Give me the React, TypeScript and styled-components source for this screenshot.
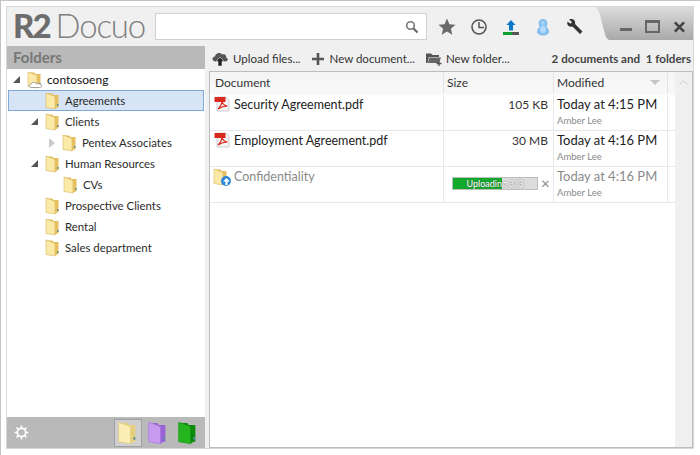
import React from 'react';
import styled, { createGlobalStyle } from 'styled-components';

const folders = [
  { name: 'contosoeng', depth: 0, arrow: 'open', root: true },
  { name: 'Agreements', depth: 1, selected: true },
  { name: 'Clients', depth: 1, arrow: 'open' },
  { name: 'Pentex Associates', depth: 2, arrow: 'closed' },
  { name: 'Human Resources', depth: 1, arrow: 'open' },
  { name: 'CVs', depth: 2 },
  { name: 'Prospective Clients', depth: 1 },
  { name: 'Rental', depth: 1 },
  { name: 'Sales department', depth: 1 },
];

const documents = [
  { name: 'Security Agreement.pdf', size: '105 KB', modified: 'Today at 4:15 PM' },
  { name: 'Employment Agreement.pdf', size: '30 MB', modified: 'Today at 4:16 PM' },
];

function FolderIcon({
  size = 18,
  light = '#fbe9a8',
  dark = '#e6c05f',
  edge = '#cda84f',
  cloud = false,
}: {
  size?: number;
  light?: string;
  dark?: string;
  edge?: string;
  cloud?: boolean;
}) {
  return (
    <svg width={size} height={size} viewBox="0 0 18 18">
      <path d="M2 1.5 H8.5 L9.5 3 H14.5 V15.5 H8 Z" fill={dark} />
      <path d="M2 1 L9 3.5 L11 4.5 V17 L2 15.5 Z" fill={light} stroke={edge} strokeWidth="0.5" />
      <path d="M11 4.5 L13 5 V15.5 L11 17 Z" fill={dark} />
      <rect x="13" y="12" width="1.5" height="2" fill="#5f8f9f" />
      {cloud && (
        <path
          d="M5 16.5 C2.5 16.5 2.5 13.5 5 13.3 C5.5 10.8 9.5 10.5 10.5 13 C13 12.3 15.5 12.8 15.5 14.8 C15.5 16 14.5 16.5 13.5 16.5 Z"
          fill="#fff"
          stroke="#8a8a8a"
          strokeWidth="0.8"
        />
      )}
    </svg>
  );
}

function PdfIcon() {
  return (
    <svg width="16" height="16" viewBox="0 0 16 16">
      <path d="M3 1 H12 L15 4 V15 H3 Z" fill="#f4f4f4" stroke="#c4c4c4" strokeWidth="0.8" />
      <rect x="0.5" y="1" width="11" height="5" fill="#d9281c" />
      <path d="M4 13 C7 10 8 7 7.6 5 C9 8.5 11 10 13.5 10 C10 10 7 11 4 13 Z" fill="none" stroke="#d9281c" strokeWidth="1.1" />
    </svg>
  );
}

export default function App() {
  return (
    <Page>
      <GlobalStyle />
      <Window>
        <Header>
          <Logo>
            <LogoMark>R2</LogoMark>
            <LogoName>Docuo</LogoName>
          </Logo>
          <SearchBox>
            <svg width="14" height="14" viewBox="0 0 14 14">
              <circle cx="5.5" cy="5.5" r="3.8" fill="none" stroke="#777" strokeWidth="1.6" />
              <path d="M8.5 8.5 L12.5 12.5" stroke="#666" strokeWidth="2.2" />
            </svg>
          </SearchBox>
          <HeaderIcons>
            <HeaderIcon>
              <svg width="18" height="18" viewBox="0 0 18 18">
                <path d="M9 0.5 L11.4 6.2 L17.5 6.7 L12.9 10.7 L14.3 16.8 L9 13.6 L3.7 16.8 L5.1 10.7 L0.5 6.7 L6.6 6.2 Z" fill="#6a6a6a" />
              </svg>
            </HeaderIcon>
            <HeaderIcon>
              <svg width="18" height="18" viewBox="0 0 18 18">
                <circle cx="9" cy="9" r="7" fill="none" stroke="#555" strokeWidth="1.6" />
                <path d="M9 4 V9.5 H14" fill="none" stroke="#555" strokeWidth="1.5" />
              </svg>
            </HeaderIcon>
            <HeaderIcon>
              <svg width="18" height="18" viewBox="0 0 18 18">
                <path d="M9 2 L13.5 7 H11 V12.5 H7 V7 H4.5 Z" fill="#0a77c9" />
                <rect x="1" y="14" width="9" height="3" fill="#12a02c" />
                <rect x="10" y="14" width="7" height="3" fill="#555" />
              </svg>
            </HeaderIcon>
            <HeaderIcon>
              <svg width="18" height="18" viewBox="0 0 18 18">
                <path
                  d="M9 1.5 C12 1.5 12.8 3.2 12.8 5 C12.8 6.8 12.3 8 12 9 C13.6 10 14.5 12 14.5 14 C14.5 16 12 17 9 17 C6 17 3.5 16 3.5 14 C3.5 12 4.4 10 6 9 C5.7 8 5.2 6.8 5.2 5 C5.2 3.2 6 1.5 9 1.5 Z"
                  fill="#86c0f2"
                  stroke="#6aaee6"
                  strokeWidth="0.7"
                />
                <ellipse cx="9" cy="11.5" rx="3" ry="3.5" fill="#b4dafa" />
                <ellipse cx="9" cy="5" rx="1.8" ry="2.2" fill="#a8d4f8" />
              </svg>
            </HeaderIcon>
            <HeaderIcon>
              <svg width="18" height="18" viewBox="0 0 18 18">
                <path d="M3 1.5 L6 4 L4.5 5.8 L1.5 3.5 C0.5 7 3 9.5 6.5 8.5 L14 16 L16.5 13.5 L9 6 C10 2.5 7 0 3 1.5 Z" fill="#333" />
              </svg>
            </HeaderIcon>
          </HeaderIcons>
          <WindowControls>
            <ControlMin />
            <ControlMax />
            <svg width="14" height="14" viewBox="0 0 14 14">
              <path d="M2 2 L12 12 M12 2 L2 12" stroke="#444" strokeWidth="2.8" />
            </svg>
          </WindowControls>
        </Header>
        <Body>
          <Sidebar>
            <SidebarTitle>Folders</SidebarTitle>
            <Tree>
              {folders.map((f) => (
                <TreeRow key={f.name} $depth={f.depth} $selected={!!f.selected}>
                  <Arrow $kind={f.arrow} />
                  <FolderIcon cloud={!!f.root} />
                  <TreeLabel $root={!!f.root}>{f.name}</TreeLabel>
                </TreeRow>
              ))}
            </Tree>
            <SidebarFooter>
              <svg width="15" height="15" viewBox="0 0 15 15">
                <circle cx="7.5" cy="7.5" r="4.2" fill="none" stroke="#fff" strokeWidth="1.8" />
                <path d="M7.5 0.5 V3 M7.5 12 V14.5 M0.5 7.5 H3 M12 7.5 H14.5 M2.5 2.5 L4.2 4.2 M10.8 10.8 L12.5 12.5 M12.5 2.5 L10.8 4.2 M4.2 10.8 L2.5 12.5" stroke="#fff" strokeWidth="1.6" />
              </svg>
              <FooterFolders>
                <FooterButton $active><FolderIcon size={24} light="#fbeeb4" dark="#e6cf7e" edge="#e0c878" /></FooterButton>
                <FooterButton><FolderIcon size={24} light="#c79cf0" dark="#9a62d8" edge="#a878e0" /></FooterButton>
                <FooterButton><FolderIcon size={24} light="#25b51f" dark="#0a8a0c" edge="#109a10" /></FooterButton>
              </FooterFolders>
            </SidebarFooter>
          </Sidebar>
          <Main>
            <Toolbar>
              <ToolButton $gap={4}>
                <svg width="18" height="16" viewBox="0 0 18 16">
                  <path d="M4.5 10.5 C1 10.5 0.5 6 4 5.5 C4.5 2 9 1 11 3.5 C14 2.5 16 5 15 6.5 C18 7.5 17 10.5 14 10.5 Z" fill="#555" />
                  <path d="M9 6 L13 10.5 H11 V15 H7 V10.5 H5 Z" fill="#222" stroke="#eee" strokeWidth="0.6" />
                </svg>
                Upload files...
              </ToolButton>
              <ToolButton $gap={5}>
                <svg width="14" height="14" viewBox="0 0 14 14">
                  <path d="M7 1 V13 M1 7 H13" stroke="#555" strokeWidth="2.6" />
                </svg>
                New document...
              </ToolButton>
              <ToolButton $gap={3}>
                <svg width="18" height="14" viewBox="0 0 18 14">
                  <path d="M1 1.5 H6 L7.5 3 H14 V5 H4 L2.5 11 H1 Z" fill="#555" />
                  <path d="M4.5 5.5 H16 L14 11 H2.8 Z" fill="#666" />
                  <path d="M14 9 V14 M11.5 11.5 H16.5" stroke="#555" strokeWidth="1.3" />
                </svg>
                New folder...
              </ToolButton>
              <Summary>2 documents and&nbsp; 1 folders</Summary>
            </Toolbar>
            <ListPanel>
              <ListColumn>
                <ColumnHeads>
                  <NameHead>Document</NameHead>
                  <SizeHead>Size</SizeHead>
                  <ModifiedHead>
                    Modified
                    <SortArrow />
                  </ModifiedHead>
                  <HeadGap />
                </ColumnHeads>
                {documents.map((d) => (
                  <DocRow key={d.name}>
                    <NameCell>
                      <PdfIcon />
                      <DocName>{d.name}</DocName>
                    </NameCell>
                    <SizeCell>{d.size}</SizeCell>
                    <ModifiedCell>
                      <ModifiedTime>{d.modified}</ModifiedTime>
                      <Author>Amber Lee</Author>
                    </ModifiedCell>
                    <GapCell />
                  </DocRow>
                ))}
                <DocRow>
                  <UploadNameCell>
                    <UploadFolder>
                      <FolderIcon />
                      <UploadBadge>
                        <svg width="9" height="9" viewBox="0 0 9 9">
                          <path d="M4.5 1 L8 4.5 H5.6 V8 H3.4 V4.5 H1 Z" fill="#fff" />
                        </svg>
                      </UploadBadge>
                    </UploadFolder>
                    <DocName $faded>Confidentiality</DocName>
                  </UploadNameCell>
                  <ProgressCell>
                    <ProgressTrack>
                      <ProgressFill style={{ width: `${(50 / 86) * 100}%` }} />
                      <ProgressText>Uploading 3/3</ProgressText>
                    </ProgressTrack>
                    <CancelMark>×</CancelMark>
                  </ProgressCell>
                  <ModifiedCell>
                    <ModifiedTime $faded>Today at 4:16 PM</ModifiedTime>
                    <Author>Amber Lee</Author>
                  </ModifiedCell>
                  <GapCell />
                </DocRow>
              </ListColumn>
              <ScrollTrack>
                <svg width="9" height="5" viewBox="0 0 9 5">
                  <path d="M0.5 4.5 L4.5 0.8 L8.5 4.5" fill="none" stroke="#ccc" strokeWidth="1" />
                </svg>
              </ScrollTrack>
            </ListPanel>
          </Main>
        </Body>
      </Window>
    </Page>
  );
}

const GlobalStyle = createGlobalStyle`
  html, body {
    margin: 0;
    padding: 0;
    background: #fff;
  }
  body {
    font-family: "Lato", "Open Sans", sans-serif;
    color: #222;
  }
`;

const Page = styled.div`
  box-sizing: border-box;
  width: 700px;
  height: 455px;
  padding: 5px 6px 6px 5px;
  border-top: 1px solid #c4c4c4;
  border-left: 1px solid #c4c4c4;
`;

const Window = styled.div`
  box-sizing: border-box;
  height: 100%;
  display: flex;
  flex-direction: column;
  background: #f0f0f0;
  border: 1px solid #d8d8d8;
`;

const Header = styled.div`
  flex: none;
  height: 39px;
  display: flex;
  align-items: flex-start;
`;

const Logo = styled.div`
  width: 148px;
  height: 37px;
  padding-left: 6px;
  box-sizing: border-box;
  display: flex;
  align-items: center;
  gap: 6px;
  color: #777;
  white-space: nowrap;
`;

const LogoMark = styled.span`
  font-family: "Lato", sans-serif;
  font-weight: 900;
  font-size: 33px;
  letter-spacing: -2px;
  line-height: 1;
  color: #6d6d6d;
`;

const LogoName = styled.span`
  font-family: "Lato", sans-serif;
  font-weight: 300;
  font-size: 33px;
  letter-spacing: -1.2px;
  line-height: 1;
  color: #808080;
`;

const SearchBox = styled.div`
  box-sizing: border-box;
  width: 272px;
  height: 27px;
  margin-top: 6px;
  background: #fff;
  border: 1px solid #d0d0d0;
  display: flex;
  align-items: center;
  justify-content: flex-end;
  padding-right: 7px;
`;

const HeaderIcons = styled.div`
  display: flex;
  margin-left: 4px;
  margin-top: 10px;
`;

const HeaderIcon = styled.div`
  width: 32px;
  height: 20px;
  display: flex;
  align-items: center;
  justify-content: center;
`;

const WindowControls = styled.div`
  box-sizing: border-box;
  width: 97px;
  height: 33px;
  margin-left: auto;
  padding: 6px 7px 0 24px;
  display: flex;
  align-items: center;
  gap: 13px;
  background: linear-gradient(#dcdcdc, #a9a9a9);
  clip-path: path('M0 0 H97 V33 H14 C10 33 9 27 7 20 C5 12 4 5 0 0 Z');
`;

const ControlMin = styled.div`
  width: 13px;
  height: 3px;
  margin-top: 6px;
  background: #666;
`;

const ControlMax = styled.div`
  box-sizing: border-box;
  width: 16px;
  height: 13px;
  border: 2px solid #666;
  border-top-width: 3px;
`;

const Body = styled.div`
  flex: 1;
  min-height: 0;
  display: flex;
`;

const Sidebar = styled.div`
  flex: none;
  width: 198px;
  display: flex;
  flex-direction: column;
`;

const SidebarTitle = styled.div`
  height: 23px;
  padding-left: 6px;
  background: #b9b9b9;
  color: #777;
  font-size: 15px;
  font-weight: 700;
  line-height: 23px;
`;

const Tree = styled.div`
  flex: 1;
  background: #fff;
`;

const TreeRow = styled.div<{ $depth: number; $selected: boolean }>`
  box-sizing: border-box;
  height: 21px;
  margin: 0 1px;
  padding-left: ${(p) => 4 + p.$depth * 18}px;
  display: flex;
  align-items: center;
  background: ${(p) => (p.$selected ? '#d6e4f5' : 'transparent')};
  border: 1px solid ${(p) => (p.$selected ? '#7fa9d8' : 'transparent')};
`;

const Arrow = styled.span<{ $kind?: string }>`
  flex: none;
  width: 0;
  height: 0;
  margin-right: 6px;
  border-style: solid;
  ${(p) =>
    p.$kind === 'open'
      ? 'border-width: 0 0 7px 7px; border-color: transparent transparent #555 transparent;'
      : p.$kind === 'closed'
        ? 'border-width: 5px 0 5px 6px; border-color: transparent transparent transparent #ccc;'
        : 'border-width: 0 0 0 7px; border-color: transparent;'}
`;

const TreeLabel = styled.span<{ $root: boolean }>`
  margin-left: 3px;
  font-size: ${(p) => (p.$root ? 12 : 11.4)}px;
  color: ${(p) => (p.$root ? '#111' : '#2b2b2b')};
  white-space: nowrap;
`;

const SidebarFooter = styled.div`
  flex: none;
  height: 31px;
  background: #b9b9b9;
  display: flex;
  align-items: center;
  padding-left: 7px;
`;

const FooterFolders = styled.div`
  margin-left: auto;
  margin-right: 3px;
  display: flex;
  gap: 2px;
`;

const FooterButton = styled.div<{ $active?: boolean }>`
  box-sizing: border-box;
  width: 28px;
  height: 28px;
  display: flex;
  align-items: center;
  justify-content: center;
  background: ${(p) => (p.$active ? '#cfcfcf' : 'transparent')};
  border: 1px solid ${(p) => (p.$active ? '#a0a0a0' : 'transparent')};
`;

const Main = styled.div`
  flex: 1;
  min-width: 0;
  display: flex;
  flex-direction: column;
  padding-left: 4px;
`;

const Toolbar = styled.div`
  flex: none;
  height: 25px;
  display: flex;
  align-items: center;
  padding-left: 2px;
  gap: 10px;
`;

const ToolButton = styled.div<{ $gap: number }>`
  display: flex;
  align-items: center;
  gap: ${(p) => p.$gap}px;
  font-size: 11.5px;
  color: #333;
  white-space: nowrap;
`;

const Summary = styled.div`
  margin-left: auto;
  padding-right: 2px;
  font-size: 11.6px;
  font-weight: 700;
  color: #444;
  white-space: nowrap;
`;

const ListPanel = styled.div`
  flex: 1;
  min-height: 0;
  display: flex;
  background: #fff;
  border: 1px solid #bdbdbd;
`;

const ListColumn = styled.div`
  flex: 1;
  min-width: 0;
`;

const ColumnHeads = styled.div`
  height: 23px;
  padding-bottom: 2px;
  box-sizing: border-box;
  display: grid;
  grid-template-columns: 234px 110px 114px 1fr;
  background: linear-gradient(#f4f4f4, #f9f9f9);
  font-size: 12px;
  color: #333;
`;

const HeadCell = styled.div`
  box-sizing: border-box;
  display: flex;
  align-items: center;
  padding-left: 5px;
  border-right: 1px solid #e4e4e4;
`;

const NameHead = styled(HeadCell)``;
const SizeHead = styled(HeadCell)`
  padding-left: 3px;
`;
const ModifiedHead = styled(HeadCell)`
  padding-left: 3px;
  justify-content: space-between;
  padding-right: 7px;
`;
const HeadGap = styled.div``;

const SortArrow = styled.span`
  width: 0;
  height: 0;
  border-style: solid;
  border-width: 5px 5px 0 5px;
  border-color: #c4c4c4 transparent transparent transparent;
`;

const DocRow = styled.div`
  box-sizing: border-box;
  height: 36px;
  display: grid;
  grid-template-columns: 234px 110px 114px 1fr;
  border-bottom: 1px solid #e8e8e8;
`;

const CellBase = styled.div`
  box-sizing: border-box;
  border-right: 1px solid #e8e8e8;
`;

const NameCell = styled(CellBase)`
  display: flex;
  align-items: flex-start;
  padding: 1px 0 0 4px;
  gap: 4px;
`;

const UploadNameCell = styled(NameCell)`
  padding-left: 2px;
  gap: 4px;
`;

const DocName = styled.span<{ $faded?: boolean }>`
  font-size: 12.5px;
  line-height: 17px;
  color: ${(p) => (p.$faded ? '#8a8a8a' : '#222')};
  white-space: nowrap;
`;

const SizeCell = styled(CellBase)`
  padding: 3px 5px 0 0;
  text-align: right;
  font-size: 12px;
  line-height: 14px;
  color: #333;
`;

const ProgressCell = styled(CellBase)`
  display: flex;
  align-items: flex-start;
  padding: 10px 0 0 8px;
`;

const ProgressTrack = styled.div`
  position: relative;
  box-sizing: border-box;
  width: 86px;
  height: 13px;
  background: #dcdcdc;
  border: 1px solid #bdbdbd;
  overflow: hidden;
`;

const ProgressFill = styled.div`
  height: 100%;
  background: #12a92c;
`;

const ProgressText = styled.span`
  position: absolute;
  top: 0;
  left: 0;
  right: 0;
  text-align: center;
  font-size: 9px;
  line-height: 11px;
  color: #fff;
  text-shadow: 0 0 2px #555;
  white-space: nowrap;
`;

const CancelMark = styled.span`
  margin-left: 3px;
  font-size: 15px;
  line-height: 13px;
  color: #888;
`;

const ModifiedCell = styled(CellBase)`
  padding: 1px 0 0 3px;
`;

const ModifiedTime = styled.div<{ $faded?: boolean }>`
  font-size: 13px;
  line-height: 17px;
  color: ${(p) => (p.$faded ? '#8a8a8a' : '#222')};
  white-space: nowrap;
`;

const Author = styled.div`
  font-size: 9.5px;
  line-height: 13px;
  margin-top: 1px;
  color: #8a8a8a;
`;

const GapCell = styled.div``;

const UploadFolder = styled.div`
  position: relative;
  width: 18px;
  height: 18px;
`;

const UploadBadge = styled.div`
  position: absolute;
  right: -1px;
  bottom: 0;
  width: 10px;
  height: 10px;
  border-radius: 50%;
  background: #2a87dc;
  display: flex;
  align-items: center;
  justify-content: center;
`;

const ScrollTrack = styled.div`
  flex: none;
  width: 17px;
  background: #f0f0f0;
  display: flex;
  justify-content: center;
  align-items: flex-start;
  padding-top: 8px;
`;
